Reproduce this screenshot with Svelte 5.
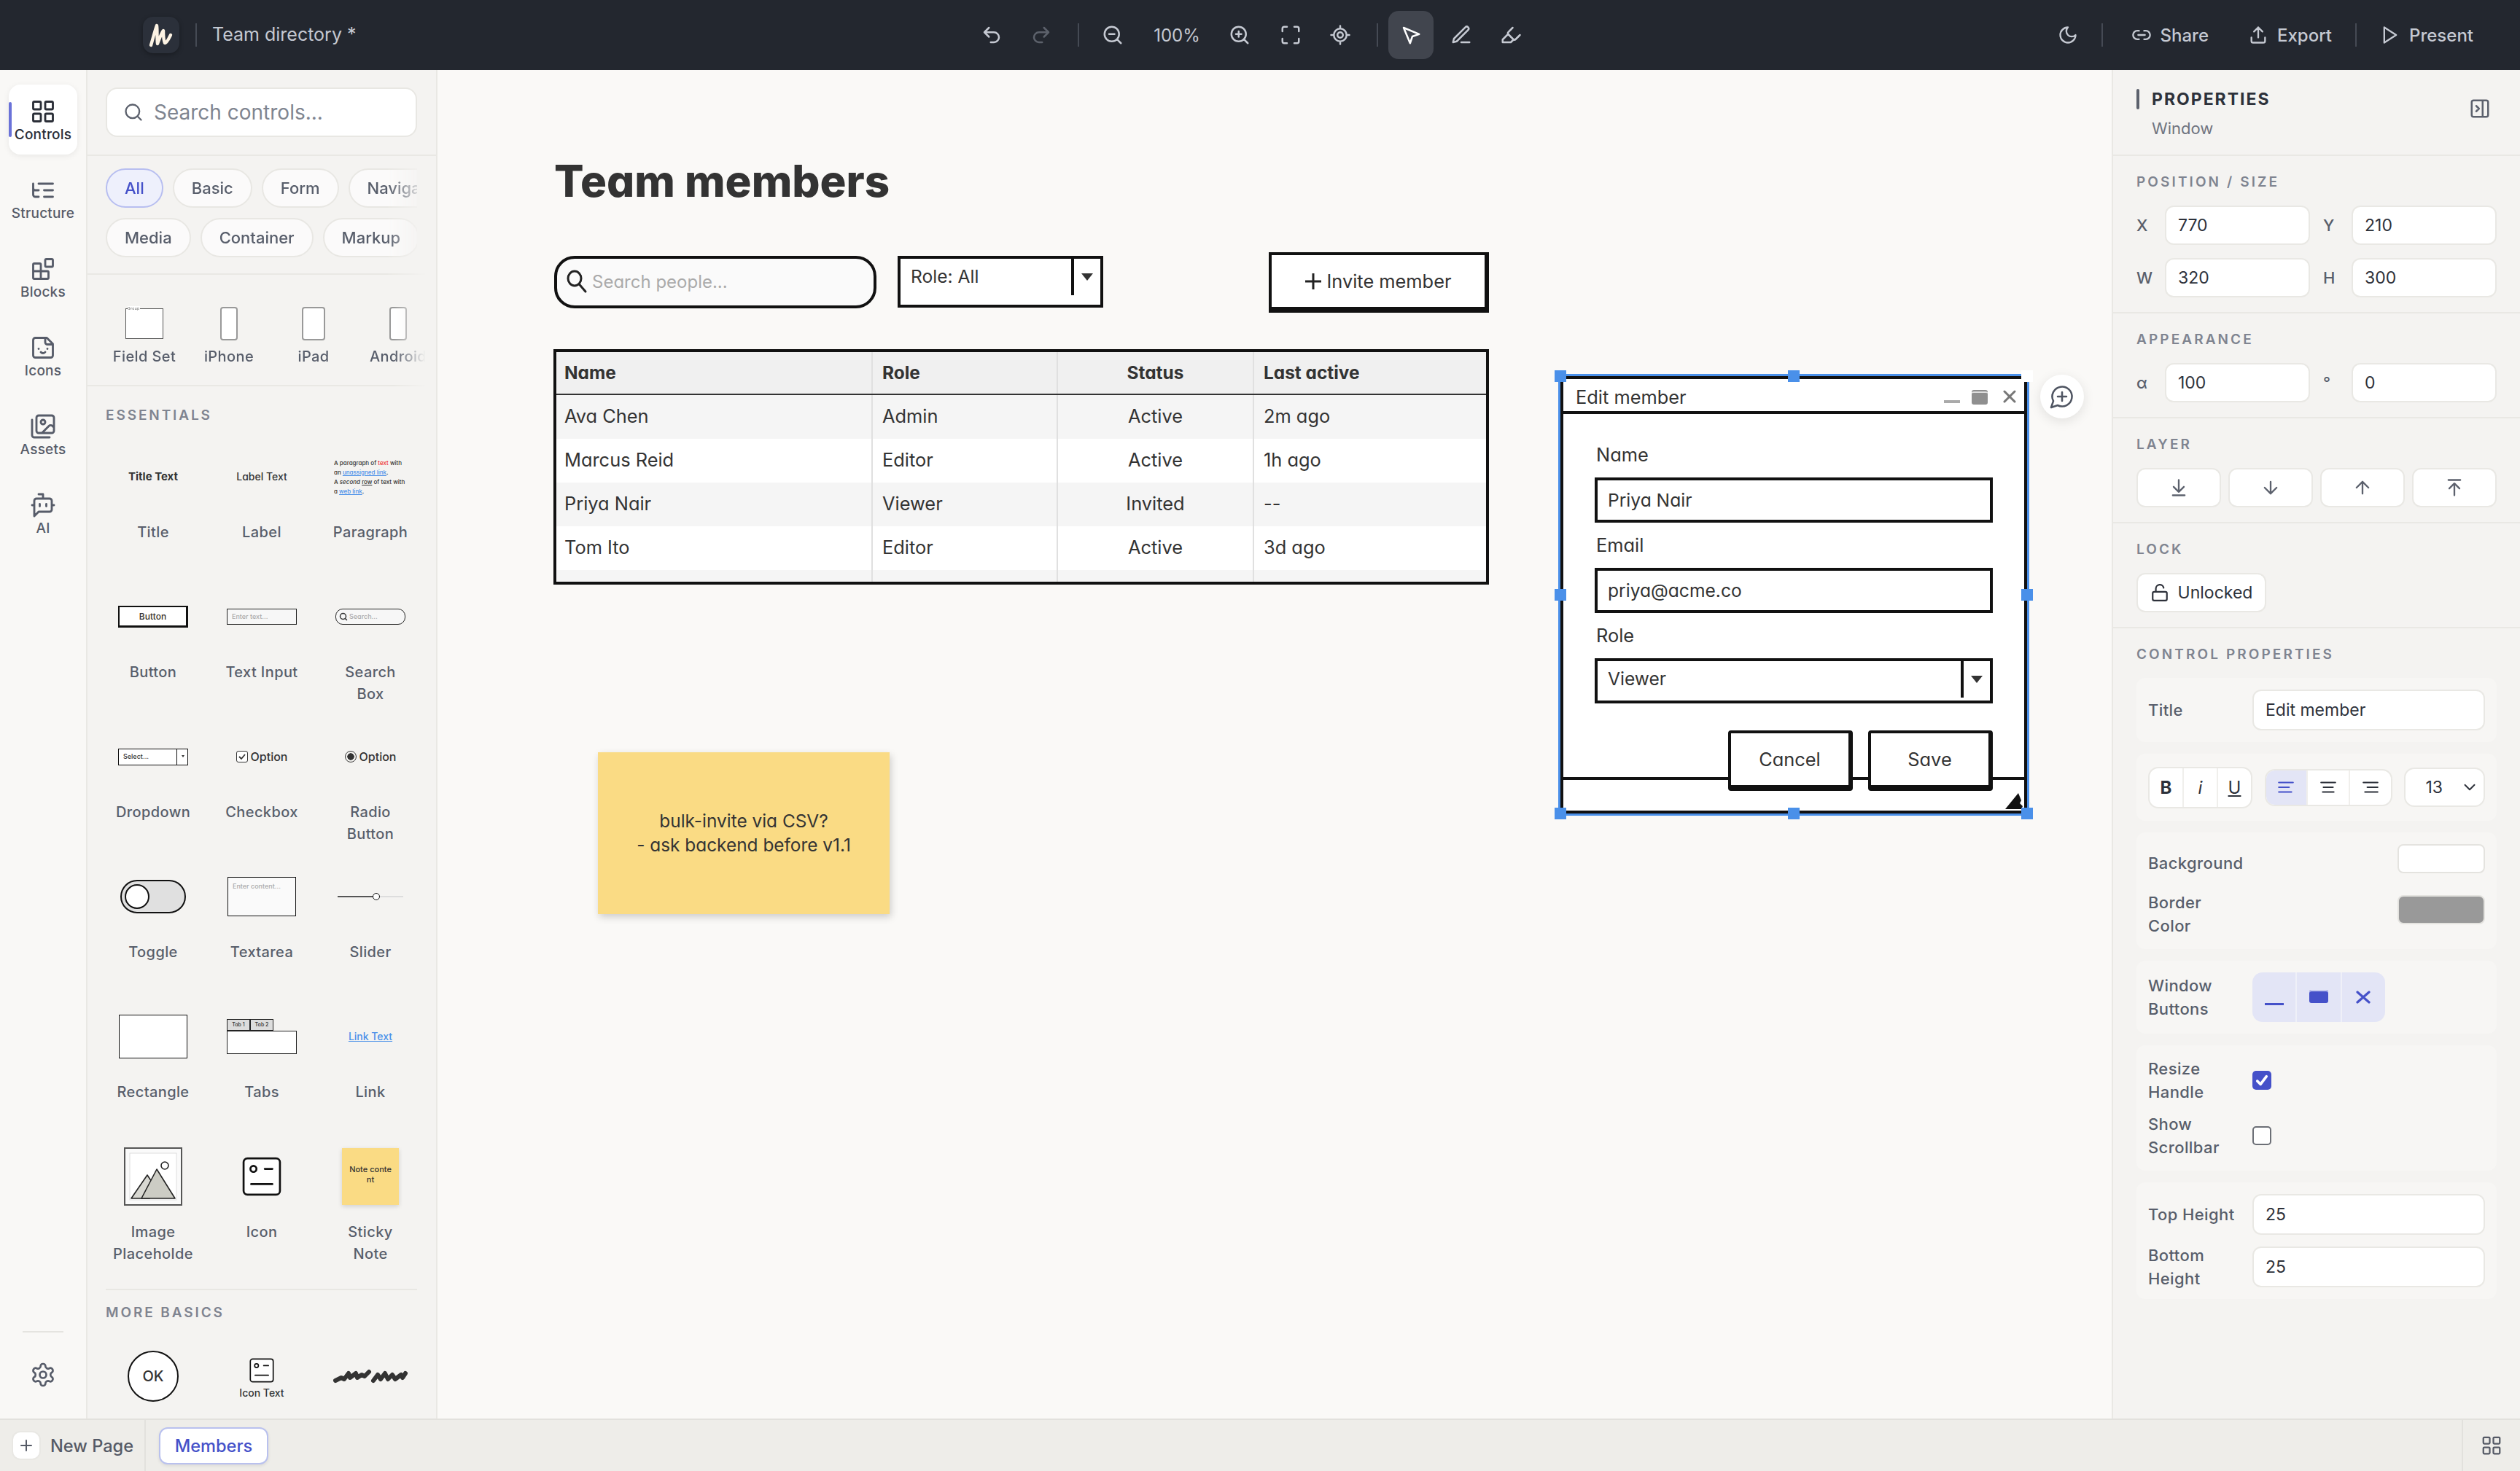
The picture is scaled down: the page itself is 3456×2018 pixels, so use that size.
<script>
	const rect = (x, y, w, h, r = 0) =>
		`M${x + r} ${y}h${w - 2 * r}a${r} ${r} 0 0 1 ${r} ${r}v${h - 2 * r}a${r} ${r} 0 0 1 -${r} ${r}h-${w - 2 * r}a${r} ${r} 0 0 1 -${r} -${r}v-${h - 2 * r}a${r} ${r} 0 0 1 ${r} -${r}z`;
	const circ = (x, y, r) => `M${x - r} ${y}a${r} ${r} 0 1 0 ${2 * r} 0a${r} ${r} 0 1 0 -${2 * r} 0z`;

	const ICONS = {
		undo: 'M9 14 4 9l5-5M4 9h10.5a5.5 5.5 0 0 1 0 11H11',
		redo: 'm15 14 5-5-5-5M20 9H9.5a5.5 5.5 0 0 0 0 11H13',
		zoomOut: circ(11, 11, 8) + 'M21 21l-4.3-4.3M8 11h6',
		zoomIn: circ(11, 11, 8) + 'M21 21l-4.3-4.3M8 11h6M11 8v6',
		fit: 'M3 8V5a2 2 0 0 1 2-2h3M16 3h3a2 2 0 0 1 2 2v3M21 16v3a2 2 0 0 1-2 2h-3M8 21H5a2 2 0 0 1-2-2v-3',
		target: circ(12, 12, 7) + circ(12, 12, 3) + 'M12 2v3M12 19v3M2 12h3M19 12h3',
		cursor: 'm4 4 7.07 17 2.51-7.39L21 11.07z',
		pen: 'M12 20h9M16.5 3.5a2.12 2.12 0 0 1 3 3L7 19l-4 1 1-4z',
		marker: 'm9 11-6 6v3h9l3-3M22 12l-4.6 4.6a2 2 0 0 1-2.8 0l-5.2-5.2a2 2 0 0 1 0-2.8L14 4',
		moon: 'M12 3a6 6 0 0 0 9 9 9 9 0 1 1-9-9z',
		link: 'M9 17H7A5 5 0 0 1 7 7h2M15 7h2a5 5 0 1 1 0 10h-2M8 12h8',
		upload: 'M12 15V3M7 8l5-5 5 5M4 15v4a2 2 0 0 0 2 2h12a2 2 0 0 0 2-2v-4',
		play: 'M5 3l14 9-14 9V3z',
		grid: rect(3, 3, 7, 7, 1) + rect(14, 3, 7, 7, 1) + rect(14, 14, 7, 7, 1) + rect(3, 14, 7, 7, 1),
		tree: 'M21 12h-8M21 6H8M21 18h-8M3 6v4c0 1.1.9 2 2 2h3M3 10v6c0 1.1.9 2 2 2h3',
		blocks: rect(14, 3, 7, 7, 1) + 'M10 21V8a1 1 0 0 0-1-1H4a1 1 0 0 0-1 1v12a1 1 0 0 0 1 1h12a1 1 0 0 0 1-1v-5a1 1 0 0 0-1-1H3',
		sticker: 'M15.5 3H5a2 2 0 0 0-2 2v14c0 1.1.9 2 2 2h14a2 2 0 0 0 2-2V8.5L15.5 3ZM14 3v4a2 2 0 0 0 2 2h4M8 13h.01M16 13h.01M10 16s.8 1 2 1c1.3 0 2-1 2-1',
		images: 'M18 22H4a2 2 0 0 1-2-2V6M22 13l-1.296-1.296a2.41 2.41 0 0 0-3.408 0L11 18' + circ(12, 8, 2) + rect(6, 2, 16, 16, 2),
		bot: 'M12 6V2H8M8 18l-4 4V8a2 2 0 0 1 2-2h12a2 2 0 0 1 2 2v8a2 2 0 0 1-2 2ZM2 12h2M9 11v2M15 11v2M20 12h2',
		gear: 'M12.22 2h-.44a2 2 0 0 0-2 2v.18a2 2 0 0 1-1 1.73l-.43.25a2 2 0 0 1-2 0l-.15-.08a2 2 0 0 0-2.73.73l-.22.38a2 2 0 0 0 .73 2.73l.15.1a2 2 0 0 1 1 1.72v.51a2 2 0 0 1-1 1.74l-.15.09a2 2 0 0 0-.73 2.73l.22.38a2 2 0 0 0 2.73.73l.15-.08a2 2 0 0 1 2 0l.43.25a2 2 0 0 1 1 1.73V20a2 2 0 0 0 2 2h.44a2 2 0 0 0 2-2v-.18a2 2 0 0 1 1-1.73l.43-.25a2 2 0 0 1 2 0l.15.08a2 2 0 0 0 2.73-.73l.22-.39a2 2 0 0 0-.73-2.73l-.15-.08a2 2 0 0 1-1-1.74v-.5a2 2 0 0 1 1-1.74l.15-.09a2 2 0 0 0 .73-2.73l-.22-.38a2 2 0 0 0-2.73-.73l-.15.08a2 2 0 0 1-2 0l-.43-.25a2 2 0 0 1-1-1.73V4a2 2 0 0 0-2-2z' + circ(12, 12, 3),
		search: circ(11, 11, 8) + 'M21 21l-4.3-4.3',
		collapse: rect(3, 3, 18, 18, 2) + 'M15 3v18M8 9l3 3-3 3',
		toBottom: 'M12 17V3M6 11l6 6 6-6M19 21H5',
		down: 'M12 5v14M19 12l-7 7-7-7',
		up: 'M12 19V5M5 12l7-7 7 7',
		toTop: 'M5 3h14M18 13l-6-6-6 6M12 7v14',
		unlock: rect(3, 11, 18, 11, 2) + 'M7 11V7a5 5 0 0 1 9.9-1',
		alignL: 'M3 6h18M3 12h13M3 18h16',
		alignC: 'M3 6h18M6 12h12M5 18h14',
		alignR: 'M3 6h18M8 12h13M5 18h16',
		chevron: 'm6 9 6 6 6-6',
		plus: 'M5 12h14M12 5v14',
		comment: 'M7.9 20A9 9 0 1 0 4 16.1L2 22ZM8 12h8M12 8v8',
		pages: rect(3, 3, 7, 7, 1) + rect(14, 3, 7, 7, 1) + rect(14, 14, 7, 7, 1) + rect(3, 14, 7, 7, 1)
	};

	const railItems = [
		{ icon: 'grid', label: 'Controls', active: true },
		{ icon: 'tree', label: 'Structure' },
		{ icon: 'blocks', label: 'Blocks' },
		{ icon: 'sticker', label: 'Icons' },
		{ icon: 'images', label: 'Assets' },
		{ icon: 'bot', label: 'AI' }
	];
	const chipRows = [
		['All', 'Basic', 'Form', 'Navigation'],
		['Media', 'Container', 'Markup']
	];
	const members = [
		['Ava Chen', 'Admin', 'Active', '2m ago'],
		['Marcus Reid', 'Editor', 'Active', '1h ago'],
		['Priya Nair', 'Viewer', 'Invited', '--'],
		['Tom Ito', 'Editor', 'Active', '3d ago']
	];
	const handles = ['tl', 'tm', 'tr', 'ml', 'mr', 'bl', 'bm', 'br'];
</script>

{#snippet ic(name, size = 16, sw = 2)}
	<svg class="ic" width={size} height={size} viewBox="0 0 24 24" fill="none" stroke="currentColor" stroke-width={sw} stroke-linecap="round" stroke-linejoin="round"><path d={ICONS[name]} /></svg>
{/snippet}

{#snippet sketchIcon(w, h)}
	<svg width={w} height={h} viewBox="0 0 26 26" fill="none" stroke="#111" stroke-width="1.3" stroke-linecap="round"><rect x="1" y="1" width="24" height="24" rx="2.5" fill="#fff" /><circle cx="7.5" cy="8" r="2" /><path d="M15 8h5M6 18h14" /></svg>
{/snippet}

<div class="app">
	<header class="topbar">
		<div class="logo">
			<svg width="18" height="18" viewBox="0 0 18 18" fill="none" stroke="#fdf3e3" stroke-width="2.2" stroke-linecap="round" stroke-linejoin="round"><path d="M2 16C3.5 11 5 5 6 2.5C6.5 6 6 11 6.5 15C8 11 9.5 7 10.5 6C10.5 9 10.5 12 11.5 14.5C13 14.5 14.5 11 15.5 9" /></svg>
		</div>
		<i class="tb-div title-div"></i>
		<span class="doc-title">Team directory *</span>

		<div class="tools">
			<button class="tb">{@render ic('undo', 15)}</button>
			<button class="tb off">{@render ic('redo', 15)}</button>
			<i class="tb-div"></i>
			<button class="tb">{@render ic('zoomOut', 15)}</button>
			<span class="pct">100%</span>
			<button class="tb">{@render ic('zoomIn', 15)}</button>
			<button class="tb fit">{@render ic('fit', 15)}</button>
			<button class="tb">{@render ic('target', 15)}</button>
			<i class="tb-div second"></i>
			<button class="tb select">{@render ic('cursor', 15)}</button>
			<button class="tb">{@render ic('pen', 15)}</button>
			<button class="tb">{@render ic('marker', 15)}</button>
		</div>

		<div class="actions">
			{@render ic('moon', 14)}
			<i class="tb-div moon-div"></i>
			<span class="act">{@render ic('link', 14)} Share</span>
			<span class="act">{@render ic('upload', 14)} Export</span>
			<i class="tb-div end-div"></i>
			<span class="act">{@render ic('play', 14)} Present</span>
		</div>
	</header>

	<div class="main">
		<nav class="rail">
			{#each railItems as item}
				<div class="rail-item" class:active={item.active}>
					{@render ic(item.icon, 18, 1.9)}
					<span>{item.label}</span>
				</div>
			{/each}
			<div class="rail-foot">
				<i></i>
				{@render ic('gear', 18, 1.8)}
			</div>
		</nav>

		<aside class="library">
			<div class="lib-search">
				<div class="search-input">
					{@render ic('search', 14, 2)}
					<span>Search controls...</span>
				</div>
			</div>
			<div class="chips">
				{#each chipRows as row}
					<div class="chip-row">
						{#each row as chip}
							<span class="chip" class:on={chip === 'All'}>{chip}</span>
						{/each}
					</div>
				{/each}
			</div>
			<div class="devices">
				<div class="dev"><div class="dev-pv"><div class="m-fieldset"><em>Group</em></div></div><span>Field Set</span></div>
				<div class="dev"><div class="dev-pv"><div class="m-phone"></div></div><span>iPhone</span></div>
				<div class="dev"><div class="dev-pv"><div class="m-phone tablet"></div></div><span>iPad</span></div>
				<div class="dev"><div class="dev-pv"><div class="m-phone"></div></div><span>Android</span></div>
			</div>

			<div class="group-title first">ESSENTIALS</div>
			<div class="grid">
				<div class="cell"><div class="pv"><b class="sk t-title">Title Text</b></div><span>Title</span></div>
				<div class="cell"><div class="pv"><span class="sk t-label">Label Text</span></div><span>Label</span></div>
				<div class="cell"><div class="pv"><p class="sk m-para">A paragraph of <em class="red">text</em> with<br />an <u class="blue">unassigned link</u>.<br />A <i>second</i> <u>row</u> of text with<br />a <u class="blue">web link</u>.</p></div><span>Paragraph</span></div>

				<div class="cell"><div class="pv"><div class="sk m-btn">Button</div></div><span>Button</span></div>
				<div class="cell"><div class="pv"><div class="sk m-input">Enter text...</div></div><span>Text Input</span></div>
				<div class="cell"><div class="pv"><div class="sk m-input round">{@render ic('search', 6, 3)} Search...</div></div><span>Search<br />Box</span></div>

				<div class="cell"><div class="pv"><div class="sk m-select"><span>Select...</span><b></b></div></div><span>Dropdown</span></div>
				<div class="cell"><div class="pv"><div class="sk m-option"><i class="m-check"><svg width="6" height="6" viewBox="0 0 6 6" fill="none" stroke="#333" stroke-width="0.9"><path d="M1 3l1.5 1.5L5 1.5" /></svg></i> Option</div></div><span>Checkbox</span></div>
				<div class="cell"><div class="pv"><div class="sk m-option"><i class="m-radio"></i> Option</div></div><span>Radio<br />Button</span></div>

				<div class="cell"><div class="pv"><div class="m-toggle"><i></i></div></div><span>Toggle</span></div>
				<div class="cell"><div class="pv"><div class="sk m-area">Enter content...</div></div><span>Textarea</span></div>
				<div class="cell"><div class="pv"><div class="m-slider"><i></i></div></div><span>Slider</span></div>

				<div class="cell"><div class="pv"><div class="m-rect"></div></div><span>Rectangle</span></div>
				<div class="cell"><div class="pv"><div class="sk m-tabs"><div><span>Tab 1</span><span>Tab 2</span></div><section></section></div></div><span>Tabs</span></div>
				<div class="cell"><div class="pv"><u class="sk m-link">Link Text</u></div><span>Link</span></div>

				<div class="cell"><div class="pv">
					<svg width="40" height="40" viewBox="0 0 40 40"><rect x="0.5" y="0.5" width="39" height="39" fill="#fafafa" stroke="#555" /><rect x="4" y="4" width="32" height="32" fill="#fff" stroke="#ddd" stroke-width="0.5" /><path d="M5 35L16 19l4 6-2.500 10z" fill="#d8d8d2" stroke="#222" stroke-width="0.8" stroke-linejoin="round" /><path d="M12 35L22.500 15L35 35z" fill="#ccccc4" stroke="#222" stroke-width="0.8" stroke-linejoin="round" /><circle cx="28" cy="12.500" r="2.500" fill="#fff" stroke="#222" stroke-width="0.8" /></svg>
				</div><span>Image<br />Placeholde</span></div>
				<div class="cell"><div class="pv">{@render sketchIcon(27, 27)}</div><span>Icon</span></div>
				<div class="cell"><div class="pv"><div class="sk m-sticky">Note conte<br />nt</div></div><span>Sticky<br />Note</span></div>
			</div>

			<div class="group-title">MORE BASICS</div>
			<div class="grid">
				<div class="cell"><div class="pv"><div class="sk m-round">OK</div></div></div>
				<div class="cell"><div class="pv stack">{@render sketchIcon(17, 17)}<span class="sk m-icontext">Icon Text</span></div></div>
				<div class="cell"><div class="pv">
					<svg width="52" height="12" viewBox="0 0 52 12" fill="none" stroke="#333" stroke-width="3" stroke-linecap="round" stroke-linejoin="round"><path d="M2 9L6 7L8 8L11 4L12 7L16 4L17 7L20 5L22 6L25 3M28 9L31 5L33 8L36 4L38 8L41 5L43 8L47 5L48 7L50 4" /></svg>
				</div></div>
			</div>
		</aside>

		<main class="canvas">
			<h1 class="sk page-title">Team members</h1>

			<div class="sk node c-search">
				<svg width="15" height="17" viewBox="0 0 15 17" fill="none" stroke="#222" stroke-width="1.500" stroke-linecap="round"><ellipse cx="6" cy="6.500" rx="4.500" ry="5" /><path d="M9.200 10.500L13.500 15.500" /></svg>
				<span>Search people...</span>
			</div>
			<div class="sk node c-select">
				<span>Role: All</span>
				<i class="sel-div"></i>
				<i class="sel-arrow"></i>
			</div>
			<button class="sk node c-invite"><svg width="12" height="12" viewBox="0 0 12 12" stroke="#222" stroke-width="1.500"><path d="M6 0.500v11M0.500 6h11" /></svg> Invite member</button>

			<div class="sk node c-table">
				<div class="tr head">
					<div class="td">Name</div><div class="td">Role</div><div class="td mid">Status</div><div class="td">Last active</div>
				</div>
				{#each members as m}
					<div class="tr">
						<div class="td">{m[0]}</div><div class="td">{m[1]}</div><div class="td mid">{m[2]}</div><div class="td">{m[3]}</div>
					</div>
				{/each}
				<div class="tr tail"><div class="td"></div><div class="td"></div><div class="td"></div><div class="td"></div></div>
			</div>

			<div class="sk node c-note">bulk-invite via CSV?<br />- ask backend before v1.1</div>

			<div class="sk node c-window">
				<div class="win-bar">
					<span>Edit member</span>
					<i class="wb-min"></i>
					<i class="wb-max"></i>
					<svg width="9" height="9" viewBox="0 0 9 9" stroke="#777" stroke-width="1.500" stroke-linecap="round"><path d="M1 1l7 7M8 1l-7 7" /></svg>
				</div>
				<div class="win-body">
					<label>Name</label>
					<div class="w-input">Priya Nair</div>
					<label>Email</label>
					<div class="w-input">priya@acme.co</div>
					<label>Role</label>
					<div class="w-input w-select">Viewer<i class="sel-div"></i><i class="sel-arrow"></i></div>
					<div class="w-actions">
						<button>Cancel</button>
						<button>Save</button>
					</div>
				</div>
				<i class="win-foot"></i>
				<svg class="win-grip" width="12" height="12" viewBox="0 0 12 12"><path d="M0 12L9 1L11 6L10 8L12 10L11 12z" fill="#111" /></svg>
			</div>
			<div class="selection">
				{#each handles as h}
					<i class={h}></i>
				{/each}
			</div>
			<div class="comment-btn">{@render ic('comment', 18, 1.7)}</div>
		</main>

		<aside class="props">
			<div class="props-head">
				<i></i>
				<div>
					<h2>PROPERTIES</h2>
					<span>Window</span>
				</div>
				{@render ic('collapse', 15, 2)}
			</div>

			<section class="sec">
				<h3>POSITION / SIZE</h3>
				<div class="pairs">
					<div class="pair"><label>X</label><div class="in">770</div></div>
					<div class="pair"><label>Y</label><div class="in">210</div></div>
					<div class="pair"><label>W</label><div class="in">320</div></div>
					<div class="pair"><label>H</label><div class="in">300</div></div>
				</div>
			</section>
			<section class="sec">
				<h3>APPEARANCE</h3>
				<div class="pairs">
					<div class="pair"><label>α</label><div class="in">100</div></div>
					<div class="pair"><label>°</label><div class="in">0</div></div>
				</div>
			</section>
			<section class="sec">
				<h3>LAYER</h3>
				<div class="layer">
					<button>{@render ic('toBottom', 14, 2)}</button>
					<button>{@render ic('down', 14, 2)}</button>
					<button>{@render ic('up', 14, 2)}</button>
					<button>{@render ic('toTop', 14, 2)}</button>
				</div>
			</section>
			<section class="sec">
				<h3>LOCK</h3>
				<button class="lock">{@render ic('unlock', 13, 2)} Unlocked</button>
			</section>

			<section class="sec last">
				<h3>CONTROL PROPERTIES</h3>
				<div class="card">
					<div class="row"><label>Title</label><div class="in tall">Edit member</div></div>
				</div>
				<div class="card fmt">
					<div class="seg text">
						<b>B</b><em>i</em><u>U</u>
					</div>
					<div class="seg align">
						<span class="sel">{@render ic('alignL', 13, 2)}</span>
						<span>{@render ic('alignC', 13, 2)}</span>
						<span>{@render ic('alignR', 13, 2)}</span>
					</div>
					<div class="size">13 {@render ic('chevron', 13, 1.800)}</div>
				</div>
				<div class="card colors">
					<div class="color-row"><label>Background</label><i class="swatch"></i></div>
					<div class="color-row"><label>Border<br />Color</label><i class="swatch grey"></i></div>
				</div>
				<div class="card">
					<div class="row">
						<label>Window<br />Buttons</label>
						<div class="win-btns">
							<span><i class="b-min"></i></span>
							<span><i class="b-max"></i></span>
							<span><svg width="10" height="10" viewBox="0 0 10 10" stroke="#4551c9" stroke-width="1.600" stroke-linecap="round"><path d="M1 1.500l8 7M9 1.500l-8 7" /></svg></span>
						</div>
					</div>
				</div>
				<div class="card tight">
					<div class="row">
						<label>Resize<br />Handle</label>
						<i class="cb on"><svg width="9" height="9" viewBox="0 0 10 10" fill="none" stroke="#fff" stroke-width="2" stroke-linecap="round" stroke-linejoin="round"><path d="M1.500 5.500L4 8l4.500-6" /></svg></i>
					</div>
					<div class="row">
						<label>Show<br />Scrollbar</label>
						<i class="cb"></i>
					</div>
				</div>
				<div class="card gapped">
					<div class="row"><label>Top Height</label><div class="in tall">25</div></div>
					<div class="row"><label>Bottom<br />Height</label><div class="in tall">25</div></div>
				</div>
			</section>
		</aside>
	</div>

	<footer class="pagebar">
		<div class="new-page">
			<span class="plus">{@render ic('plus', 12, 2)}</span>
			New Page
		</div>
		<div class="page-tab">Members</div>
		<div class="page-grid">{@render ic('pages', 15, 1.800)}</div>
	</footer>
</div>

<style>
	:global(body) {
		margin: 0;
		background: #faf9f7;
	}
	.app {
		zoom: 2;
		width: 1728px;
		height: 1009px;
		display: flex;
		flex-direction: column;
		overflow: hidden;
		font-family: Inter, 'Liberation Sans', sans-serif;
		color: #333;
	}
	.ic {
		display: block;
		flex: none;
	}
	button {
		font: inherit;
		padding: 0;
		background: none;
		border: none;
		color: inherit;
	}
	label {
		display: block;
	}

	/* top bar */
	.topbar {
		height: 48px;
		flex: none;
		display: flex;
		align-items: center;
		padding: 0 32px 0 98px;
		background: #23272f;
		color: #c5c9d2;
		box-sizing: border-box;
	}
	.logo {
		width: 25px;
		height: 25px;
		border-radius: 7px;
		background: #2b303a;
		box-shadow: 0 1px 3px rgba(0, 0, 0, 0.3);
		display: flex;
		align-items: center;
		justify-content: center;
	}
	.tb-div {
		width: 1px;
		height: 16px;
		background: #454a54;
		flex: none;
	}
	.title-div {
		margin-left: 11px;
	}
	.doc-title {
		margin: -1px 0 0 10.5px;
		width: 519.5px;
		font-size: 12.5px;
	}
	.tools {
		display: flex;
		align-items: center;
		gap: 4px;
	}
	.tools .tb-div {
		margin: 0 4px 0 6px;
	}
	.tools .tb-div.second {
		margin-right: 3px;
	}
	.tb {
		width: 30px;
		height: 33px;
		display: flex;
		align-items: center;
		justify-content: center;
		border-radius: 7px;
	}
	.tb.off {
		color: #5c616b;
	}
	.tb.fit {
		margin-left: 1px;
	}
	.tb.select {
		width: 31px;
		background: #41454e;
		color: #fff;
	}
	.pct {
		width: 49px;
		text-align: center;
		font-size: 12px;
		padding-left: 1px;
		box-sizing: border-box;
	}
	.actions {
		margin-left: auto;
		display: flex;
		align-items: center;
		font-size: 12px;
		font-weight: 500;
	}
	.actions .moon-div {
		margin: 0 19.5px 0 16px;
	}
	.actions .end-div {
		margin: 0 16px;
	}
	.act {
		display: flex;
		align-items: center;
		gap: 6px;
	}
	.act + .act {
		margin-left: 27px;
	}

	.main {
		flex: 1;
		display: flex;
		min-height: 0;
	}

	/* rail */
	.rail {
		width: 60px;
		flex: none;
		box-sizing: border-box;
		padding: 10px 6px 0;
		display: flex;
		flex-direction: column;
		gap: 6px;
		background: #f9f8f6;
		border-right: 1px solid #e9e8e4;
		position: relative;
	}
	.rail-item {
		height: 48px;
		box-sizing: border-box;
		padding-top: 1px;
		display: flex;
		flex-direction: column;
		align-items: center;
		justify-content: center;
		gap: 1px;
		border-radius: 8px;
		color: #575c69;
		font-size: 9.5px;
		font-weight: 500;
		letter-spacing: 0.1px;
		position: relative;
	}
	.rail-item.active {
		background: #fff;
		color: #2a2e37;
		box-shadow: 0 1px 4px rgba(0, 0, 0, 0.07);
	}
	.rail-item.active::before {
		content: '';
		position: absolute;
		left: 0;
		top: 12px;
		width: 2px;
		height: 24px;
		border-radius: 1px;
		background: #6a72d8;
	}
	.rail-foot {
		margin-top: auto;
		padding-bottom: 21px;
		display: flex;
		flex-direction: column;
		align-items: center;
		gap: 20px;
		color: #575c69;
	}
	.rail-foot i {
		width: 28px;
		height: 1px;
		background: #e5e4e0;
	}

	/* library */
	.library {
		width: 240px;
		flex: none;
		box-sizing: border-box;
		background: #f4f3f1;
		border-right: 1px solid #e9e8e4;
		overflow: hidden;
	}
	.lib-search {
		padding: 12px 13px 12px 12.5px;
		border-bottom: 1px solid #e9e8e4;
	}
	.search-input {
		height: 34px;
		box-sizing: border-box;
		display: flex;
		align-items: center;
		gap: 7px;
		padding: 0 11px;
		background: #fff;
		border: 1px solid #e8e7e3;
		border-radius: 8px;
		font-size: 14px;
		color: #7f8590;
	}
	.search-input .ic {
		color: #5c616d;
	}
	.chips {
		padding: 8.5px 13px 11px 12.5px;
		display: flex;
		flex-direction: column;
		gap: 7px;
		border-bottom: 1px solid #e9e8e4;
		-webkit-mask-image: linear-gradient(90deg, #000 86%, transparent 97%);
		mask-image: linear-gradient(90deg, #000 86%, transparent 97%);
	}
	.chip-row {
		display: flex;
		gap: 6.5px;
		overflow: hidden;
	}
	.chip {
		flex: none;
		height: 27px;
		box-sizing: border-box;
		display: flex;
		align-items: center;
		padding: 0 12px;
		border: 1px solid #e8e7e3;
		border-radius: 14px;
		background: #fbfafa;
		font-size: 11px;
		font-weight: 500;
		color: #585e6b;
	}
	.chip.on {
		background: #eef0fc;
		border-color: #b7bef0;
		color: #4551c9;
	}
	.devices {
		padding: 22px 0 12px 12px;
		display: flex;
		gap: 4px;
		border-bottom: 1px solid #e9e8e4;
		-webkit-mask-image: linear-gradient(90deg, #000 88%, transparent 97%);
		mask-image: linear-gradient(90deg, #000 88%, transparent 97%);
	}
	.dev {
		flex: none;
		width: 54px;
		text-align: center;
		font-size: 10px;
		font-weight: 500;
		letter-spacing: 0.2px;
		line-height: 15px;
		color: #585e6b;
	}
	.dev-pv {
		height: 23px;
		margin-bottom: 3.5px;
		display: flex;
		justify-content: center;
	}
	.m-fieldset {
		width: 26px;
		height: 21px;
		margin-top: 1px;
		box-sizing: border-box;
		background: #fff;
		border: 0.5px solid #555;
		position: relative;
	}
	.m-fieldset em {
		position: absolute;
		left: 1px;
		top: -2px;
		font: 2.5px Inter, sans-serif;
		background: #fff;
		color: #666;
	}
	.m-phone {
		width: 12px;
		height: 23px;
		box-sizing: border-box;
		background: #fff;
		border: 1px solid #999;
		border-radius: 2px;
	}
	.m-phone.tablet {
		width: 16px;
	}

	.group-title {
		margin: 9.5px 12.5px 12.5px;
		font-size: 9.5px;
		line-height: 12px;
		font-weight: 600;
		letter-spacing: 1.45px;
		color: #7f8490;
	}
	.group-title.first {
		margin: 14px 12.5px 11px;
	}
	.grid {
		margin: 0 12px;
		display: grid;
		grid-template-columns: repeat(3, 66px);
		column-gap: 8.5px;
		grid-auto-rows: 96px;
	}
	.grid + .group-title {
		margin-top: 6px;
		padding-top: 9.5px;
		border-top: 1px solid #e8e7e3;
		margin-left: 12.5px;
		margin-right: 13px;
	}
	.cell {
		text-align: center;
		font-size: 10px;
		font-weight: 500;
		letter-spacing: 0.2px;
		line-height: 15px;
		color: #585e6b;
	}
	.pv {
		height: 50px;
		margin-bottom: 5.5px;
		display: flex;
		align-items: center;
		justify-content: center;
		letter-spacing: 0;
	}
	.pv.stack {
		flex-direction: column;
		gap: 2px;
		padding-top: 4px;
		box-sizing: border-box;
	}

	/* hand drawn look */
	.sk {
		font-family: Inter, 'Liberation Sans', sans-serif;
		font-feature-settings: 'cv11' 1, 'ss03' 1;
		color: #333;
	}
	.t-title {
		font-size: 7.5px;
		font-weight: 700;
	}
	.t-label {
		font-size: 7px;
	}
	.m-para {
		margin: 0;
		width: 50px;
		height: 25px;
		overflow: hidden;
		text-align: left;
		font-size: 4px;
		line-height: 6.5px;
		white-space: nowrap;
	}
	.m-para .red {
		color: #e33;
		font-style: normal;
	}
	.m-para .blue {
		color: #4a90e9;
	}
	.m-btn {
		width: 48px;
		height: 15px;
		box-sizing: border-box;
		display: flex;
		align-items: center;
		justify-content: center;
		background: #fff;
		border: 1px solid #111;
		border-right-width: 1.5px;
		border-bottom-width: 1.5px;
		font-size: 6px;
	}
	.m-input {
		width: 48px;
		height: 11px;
		box-sizing: border-box;
		display: flex;
		align-items: center;
		gap: 1px;
		padding-left: 3px;
		background: #f7f7f7;
		border: 0.8px solid #222;
		font-size: 4.500px;
		color: #aaa;
	}
	.m-input.round {
		border-radius: 5px;
		padding-left: 2px;
	}
	.m-input .ic {
		color: #333;
	}
	.m-select {
		width: 48px;
		height: 11.5px;
		box-sizing: border-box;
		display: flex;
		align-items: center;
		background: #fff;
		border: 0.8px solid #111;
		font-size: 4.500px;
		padding-left: 3px;
		position: relative;
	}
	.m-select b {
		position: absolute;
		right: 7px;
		top: 0;
		bottom: 0;
		width: 0.5px;
		background: #111;
	}
	.m-select::after {
		content: '';
		position: absolute;
		right: 2px;
		top: 4px;
		border: 1.2px solid transparent;
		border-top: 1.7px solid #333;
	}
	.m-option {
		display: flex;
		align-items: center;
		gap: 2px;
		font-size: 8px;
	}
	.m-check {
		width: 8px;
		height: 8px;
		box-sizing: border-box;
		border: 0.8px solid #333;
		border-radius: 1.5px;
		display: flex;
		align-items: center;
		justify-content: center;
		background: #fff;
	}
	.m-radio {
		width: 8px;
		height: 8px;
		box-sizing: border-box;
		border-radius: 50%;
		border: 0.8px solid #333;
		background: radial-gradient(circle, #333 45%, transparent 50%);
	}
	.m-toggle {
		width: 45px;
		height: 23px;
		box-sizing: border-box;
		padding: 2px;
		background: #e0e0e0;
		border: 1.2px solid #111;
		border-radius: 12px;
	}
	.m-toggle i {
		display: block;
		width: 17px;
		height: 17px;
		box-sizing: border-box;
		border-radius: 50%;
		border: 1.2px solid #111;
		background: #fff;
	}
	.m-area {
		width: 47px;
		height: 27px;
		box-sizing: border-box;
		padding: 3px;
		background: #fafafa;
		border: 0.8px solid #111;
		font-size: 4.500px;
		line-height: 6px;
		color: #aaa;
		text-align: left;
		white-space: nowrap;
	}
	.m-slider {
		width: 45px;
		height: 1px;
		background: linear-gradient(90deg, #555 58%, #ddd 58%);
		position: relative;
	}
	.m-slider i {
		position: absolute;
		left: 24px;
		top: -2px;
		width: 5px;
		height: 5px;
		box-sizing: border-box;
		border-radius: 50%;
		border: 0.8px solid #111;
		background: #fff;
	}
	.m-rect {
		width: 47px;
		height: 30px;
		box-sizing: border-box;
		border: 0.8px solid #111;
		background: #fff;
	}
	.m-tabs {
		width: 48px;
		height: 24px;
		display: flex;
		flex-direction: column;
		font-size: 3.500px;
	}
	.m-tabs div {
		display: flex;
		height: 8px;
	}
	.m-tabs span {
		width: 16px;
		text-align: center;
		line-height: 7px;
		box-sizing: border-box;
		background: #ddd;
		border: 0.5px solid #222;
	}
	.m-tabs section {
		flex: 1;
		background: #fff;
		border: 0.5px solid #222;
	}
	.m-link {
		font-size: 7px;
		color: #4a90e9;
	}
	.m-sticky {
		width: 39px;
		height: 39px;
		box-sizing: border-box;
		padding-top: 11px;
		background: #fadb84;
		box-shadow: 0 1px 3px rgba(0, 0, 0, 0.15);
		font-size: 5.500px;
		line-height: 7px;
	}
	.m-round {
		width: 35px;
		height: 35px;
		box-sizing: border-box;
		display: flex;
		align-items: center;
		justify-content: center;
		border: 1.3px solid #111;
		border-radius: 50%;
		background: #fff;
		font-size: 10px;
	}
	.m-icontext {
		font-size: 7px;
		line-height: 10px;
	}

	/* canvas */
	.canvas {
		flex: 1;
		position: relative;
		background: #faf9f7;
		overflow: hidden;
	}
	.node {
		position: absolute;
		box-sizing: border-box;
		font-size: 12.7px;
	}
	.page-title {
		position: absolute;
		left: 80px;
		top: 56px;
		margin: 0;
		font-size: 30px;
		line-height: 40px;
		font-weight: 800;
	}
	.c-search {
		left: 80px;
		top: 127.5px;
		width: 221px;
		height: 36px;
		display: flex;
		align-items: center;
		gap: 3px;
		padding: 0 0 1px 6px;
		background: #fafafa;
		border: 2px solid #111;
		border-radius: 14px;
		font-size: 12px;
		color: #aaa;
	}
	.c-select {
		left: 315.5px;
		top: 127.5px;
		width: 141px;
		height: 35.5px;
		padding: 4px 7px;
		background: #fff;
		border: 2px solid #111;
		line-height: 16px;
		font-size: 12.3px;
	}
	.sel-div {
		position: absolute;
		right: 18px;
		top: 0;
		height: 25px;
		width: 2px;
		background: #111;
	}
	.sel-arrow {
		position: absolute;
		right: 5px;
		top: 10px;
		border: 4px solid transparent;
		border-top: 5px solid #333;
		border-bottom: none;
	}
	.c-invite {
		left: 570px;
		top: 125px;
		width: 151px;
		height: 41.5px;
		display: flex;
		align-items: center;
		justify-content: center;
		gap: 3px;
		background: #fff;
		border: 2px solid #111;
		border-right-width: 3px;
		border-bottom-width: 4px;
		font-size: 12.7px;
	}
	.c-table {
		left: 79.5px;
		top: 191.5px;
		width: 641.5px;
		height: 161.5px;
		border: 2px solid #111;
		background: #f5f5f5;
		overflow: hidden;
	}
	.tr {
		display: grid;
		grid-template-columns: 217px 127px 134.5px 1fr;
		height: 30px;
		background: #f5f5f5;
		line-height: 28.5px;
	}
	.tr:nth-child(odd) {
		background: #fff;
	}
	.tr.head {
		height: 28.5px;
		background: #f0f0f0;
		border-bottom: 1px solid #333;
		box-sizing: content-box;
		font-weight: 700;
		line-height: 28px;
		font-size: 12.2px;
	}
	.tr.tail {
		background: #f5f5f5;
	}
	.td {
		padding-left: 6.5px;
		border-right: 1px solid #e0e0e0;
	}
	.td:first-child {
		padding-left: 5.5px;
	}
	.td:last-child {
		border-right: none;
	}
	.td.mid {
		text-align: center;
		padding-left: 0;
	}
	.c-note {
		left: 110px;
		top: 468px;
		width: 200px;
		height: 111px;
		display: flex;
		align-items: center;
		justify-content: center;
		text-align: center;
		background: #fadb84;
		box-shadow: 1px 2px 5px rgba(0, 0, 0, 0.18);
		font-size: 12.2px;
		line-height: 16.5px;
	}
	.c-window {
		left: 770px;
		top: 210px;
		width: 320px;
		height: 300px;
		background: #fff;
		border: 2px solid #111;
	}
	.win-bar {
		height: 24px;
		box-sizing: border-box;
		display: flex;
		align-items: center;
		padding: 2px 5.5px 0 8.5px;
		border-bottom: 2px solid #111;
	}
	.win-bar span {
		margin-right: auto;
	}
	.wb-min {
		width: 11px;
		height: 2px;
		margin: 7px 8px 0 0;
		background: #aaa;
	}
	.wb-max {
		width: 11px;
		height: 9px;
		margin: 1px 10.5px 0 0;
		border-radius: 1.5px;
		background: #8f8f8f;
		border-top: 1px solid #8f8f8f;
		box-shadow: inset 0 1px 0 #ddd;
	}
	.win-bar svg {
		margin-top: 0;
	}
	.win-body {
		padding: 19px 21.5px 0;
	}
	.win-body label {
		margin: 0 0 6.5px 1px;
		line-height: 18px;
	}
	.w-input {
		height: 31px;
		box-sizing: border-box;
		margin-bottom: 6.5px;
		padding-left: 7px;
		display: flex;
		align-items: center;
		border: 2px solid #111;
		position: relative;
		background: #fff;
		font-size: 12.3px;
	}
	.w-select {
		margin-bottom: 18.500px;
		padding-bottom: 3px;
	}
	.w-actions {
		display: flex;
		justify-content: flex-end;
		gap: 10.500px;
		position: relative;
		z-index: 1;
	}
	.w-actions button {
		width: 85.500px;
		height: 41.500px;
		box-sizing: border-box;
		background: #fff;
		border: 2px solid #111;
		border-right-width: 3px;
		border-bottom-width: 4px;
		border-radius: 2px;
		font-size: 12.700px;
		font-family: inherit;
		font-feature-settings: inherit;
		color: #333;
	}
	.win-foot {
		position: absolute;
		left: 0;
		right: 0;
		top: 273px;
		height: 2px;
		background: #111;
	}
	.win-grip {
		position: absolute;
		right: 1px;
		bottom: 1px;
	}
	.selection {
		position: absolute;
		left: 770px;
		top: 210px;
		width: 320px;
		height: 300px;
		outline: 1.5px solid #4a90e9;
		outline-offset: 0;
		pointer-events: none;
	}
	.selection i {
		position: absolute;
		width: 8px;
		height: 8px;
		background: #4a90e9;
	}
	.selection .tl { left: -4px; top: -4px; }
	.selection .tm { left: 156px; top: -4px; }
	.selection .tr { right: -4px; top: -4px; height: 8px; display: block; }
	.selection .ml { left: -4px; top: 146px; }
	.selection .mr { right: -4px; top: 146px; }
	.selection .bl { left: -4px; bottom: -4px; }
	.selection .bm { left: 156px; bottom: -4px; }
	.selection .br { right: -4px; bottom: -4px; }
	.comment-btn {
		position: absolute;
		left: 1099px;
		top: 209px;
		width: 30px;
		height: 30px;
		display: flex;
		align-items: center;
		justify-content: center;
		border-radius: 50%;
		background: #fff;
		box-shadow: 0 2px 8px rgba(0, 0, 0, 0.1);
		color: #4f5562;
	}

	/* properties */
	.props {
		width: 280px;
		flex: none;
		box-sizing: border-box;
		background: #f4f3f1;
		border-left: 1px solid #e9e8e4;
		overflow: hidden;
	}
	.props-head {
		height: 59px;
		box-sizing: border-box;
		display: flex;
		padding: 13px 20px 0 16px;
		border-bottom: 1px solid #e9e8e4;
	}
	.props-head > i {
		width: 2px;
		height: 14px;
		border-radius: 1px;
		background: #5c616d;
	}
	.props-head > div {
		margin-left: 8.5px;
		margin-right: auto;
	}
	.props-head .ic {
		margin-top: 6px;
		color: #5c616d;
	}
	.props-head h2 {
		margin: 0;
		font-size: 11.5px;
		line-height: 14px;
		font-weight: 700;
		letter-spacing: 1px;
		color: #2d313a;
	}
	.props-head span {
		display: block;
		margin-top: 6px;
		font-size: 11px;
		line-height: 14px;
		color: #6f7480;
	}
	.sec {
		padding: 12px 16px 10px;
		border-bottom: 1px solid #e9e8e4;
	}
	.sec.last {
		border-bottom: none;
	}
	.sec h3 {
		margin: 0 0 10px;
		font-size: 9.5px;
		line-height: 12px;
		font-weight: 600;
		letter-spacing: 1.55px;
		color: #7f8490;
	}
	.pairs {
		display: grid;
		grid-template-columns: 1fr 1fr;
		gap: 9px;
	}
	.pair {
		display: flex;
		align-items: center;
		font-size: 11px;
		font-weight: 500;
		color: #585e6b;
	}
	.pair label {
		width: 19.500px;
		flex: none;
	}
	.in {
		flex: 1;
		height: 27px;
		box-sizing: border-box;
		display: flex;
		align-items: center;
		padding-left: 8px;
		background: #fff;
		border: 1px solid #e9e8e4;
		border-radius: 6px;
		font-size: 11.500px;
		font-weight: 400;
		color: #2d313a;
	}
	.in.tall {
		height: 28px;
	}
	.layer {
		display: grid;
		grid-template-columns: repeat(4, 1fr);
		gap: 5px;
	}
	.layer button {
		height: 27px;
		display: flex;
		align-items: center;
		justify-content: center;
		background: #fff;
		border: 1px solid #e9e8e4;
		border-radius: 6px;
		color: #5c616d;
	}
	.lock {
		width: 89px;
		height: 27px;
		display: flex;
		align-items: center;
		justify-content: center;
		gap: 6px;
		background: #fff;
		border: 1px solid #e9e8e4;
		border-radius: 6px;
		font-size: 11.500px;
		color: #2d313a;
	}
	.card {
		margin-bottom: 8px;
		padding: 8px;
		background: #f7f6f4;
		border-radius: 6px;
	}
	.row {
		display: flex;
		align-items: center;
	}
	.row label, .color-row label {
		width: 71.500px;
		flex: none;
		font-size: 11px;
		line-height: 16px;
		font-weight: 500;
		letter-spacing: 0.2px;
		color: #585e6b;
	}
	.fmt {
		height: 46px;
		box-sizing: border-box;
		display: flex;
		align-items: center;
		justify-content: space-between;
		padding: 0 8px;
	}
	.seg {
		display: flex;
		background: #fff;
		border: 1px solid #e9e8e4;
		border-radius: 7px;
		overflow: hidden;
		color: #2d313a;
	}
	.seg.text {
		width: 71.500px;
		height: 28.500px;
		box-sizing: border-box;
	}
	.seg.text > * {
		flex: 1;
		display: flex;
		align-items: center;
		justify-content: center;
		font-size: 12px;
		border-left: 1px solid #f0efec;
	}
	.seg.text > *:first-child {
		border-left: none;
	}
	.seg.align {
		width: 87.500px;
		height: 25.500px;
		box-sizing: border-box;
	}
	.seg.align span {
		flex: 1;
		display: flex;
		align-items: center;
		justify-content: center;
		border-left: 1px solid #f0efec;
	}
	.seg.align .sel {
		background: #e3e5f6;
		color: #4551c9;
		border-left: none;
	}
	.size {
		width: 55.500px;
		height: 27px;
		box-sizing: border-box;
		display: flex;
		align-items: center;
		justify-content: flex-end;
		gap: 12px;
		padding-right: 3px;
		background: #fff;
		border: 1px solid #e9e8e4;
		border-radius: 7px;
		font-size: 11.500px;
		color: #2d313a;
	}
	.colors {
		height: 80px;
		box-sizing: border-box;
	}
	.color-row {
		display: flex;
		justify-content: space-between;
		align-items: flex-start;
	}
	.color-row:first-child {
		height: 32px;
	}
	.color-row:first-child label {
		padding-top: 5px;
	}
	.swatch {
		width: 60px;
		height: 20px;
		box-sizing: border-box;
		border: 1px solid #e4e3df;
		border-radius: 4px;
		background: #fff;
	}
	.swatch.grey {
		margin-top: 3px;
		background: #999;
	}
	.win-btns {
		width: 91px;
		height: 34px;
		display: flex;
		border-radius: 7px;
		overflow: hidden;
		background: #e3e5f6;
	}
	.win-btns span {
		flex: 1;
		display: flex;
		align-items: center;
		justify-content: center;
		border-left: 1px solid #eff0f8;
	}
	.win-btns span:first-child {
		border-left: none;
	}
	.b-min {
		width: 13px;
		height: 1.500px;
		margin-top: 9px;
		background: #4551c9;
	}
	.b-max {
		width: 13px;
		height: 9px;
		margin-top: -1px;
		border-radius: 1.500px;
		background: #4551c9;
		box-shadow: inset 0 1px 0 #c5c9ee;
	}
	.tight {
		display: flex;
		flex-direction: column;
		gap: 6px;
	}
	.gapped {
		display: flex;
		flex-direction: column;
		gap: 8px;
	}
	.gapped .row {
		height: 28px;
	}
	.cb {
		width: 13px;
		height: 13px;
		box-sizing: border-box;
		border: 1px solid #6c6f76;
		border-radius: 2.500px;
		background: #fff;
	}
	.cb.on {
		display: flex;
		align-items: center;
		justify-content: center;
		border: none;
		background: #4551c9;
	}

	/* page bar */
	.pagebar {
		height: 36px;
		flex: none;
		box-sizing: border-box;
		display: flex;
		align-items: center;
		background: #eeede9;
		border-top: 1px solid #e2e1dd;
		font-size: 11.8px;
		font-weight: 500;
		color: #555a66;
	}
	.new-page {
		width: 100px;
		height: 100%;
		box-sizing: border-box;
		display: flex;
		align-items: center;
		gap: 7.5px;
		padding-left: 9px;
		border-right: 1px solid #e2e1dd;
	}
	.plus {
		width: 18px;
		height: 18px;
		display: flex;
		align-items: center;
		justify-content: center;
		background: #fff;
		border-radius: 5px;
		box-shadow: 0 0 0 1px #e9e8e4;
	}
	.page-tab {
		margin-left: 9px;
		width: 75px;
		height: 25.500px;
		box-sizing: border-box;
		display: flex;
		align-items: center;
		justify-content: center;
		background: #fff;
		border: 1px solid #b9c1ee;
		border-radius: 6px;
		color: #4551c9;
		box-shadow: 0 1px 2px rgba(0, 0, 0, 0.08);
	}
	.page-grid {
		margin-left: auto;
		width: 40px;
		height: 100%;
		box-sizing: border-box;
		display: flex;
		align-items: center;
		justify-content: center;
		border-left: 1px solid #e2e1dd;
	}
</style>
